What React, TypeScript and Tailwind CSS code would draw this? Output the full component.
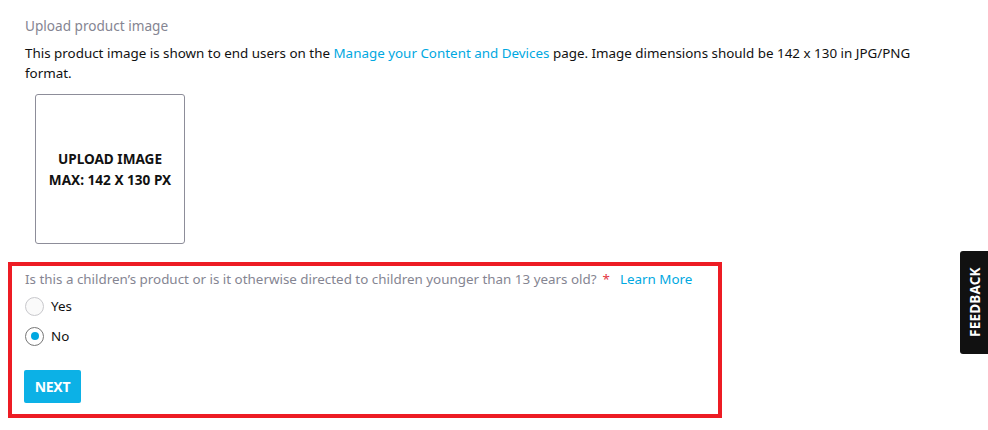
import React from "react";

export default function App() {
  return (
    <div className="relative w-[988px] h-[430px] bg-white overflow-hidden" style={{ fontFamily: '"Noto Sans", "Open Sans", sans-serif' }}>
      <div className="pl-[25px] pt-[15px]">
        <div className="text-[13.6px] leading-[22px] text-[#858592]">Upload product image</div>
        <p className="mt-[6px] text-[13.4px] leading-[20px] text-[#111] w-[900px]">
          This product image is shown to end users on the{" "}
          <span className="text-[#00a8e1]">Manage your Content and Devices</span> page. Image dimensions should be 142 x 130 in JPG/PNG format.
        </p>
        <div className="ml-[10px] mt-[11px] w-[150px] h-[150px] border border-[#8d8d99] rounded-[3px] flex flex-col items-center justify-center text-[13.6px] leading-[21px] font-bold text-[#111]">
          <div>UPLOAD IMAGE</div>
          <div>MAX: 142 X 130 PX</div>
        </div>
      </div>
      <div className="ml-[8px] mt-[18px] w-[714px] h-[156px] border-[4px] border-[#ed1c24] pl-[13px] pt-[3px]">
        <div className="text-[13.4px] leading-[20px] text-[#858592] flex items-center whitespace-nowrap">
          <span>Is this a children’s product or is it otherwise directed to children younger than 13 years old?</span>
          <span className="text-[#e3343f] ml-[6px]">*</span>
          <span className="text-[#00a8e1] ml-[10px]">Learn More</span>
        </div>
        <div className="mt-[7px] h-[20px] flex items-center gap-[7px] text-[13.4px] text-[#111]">
          <span className="w-[19px] h-[19px] rounded-full border border-[#c8c8cc] bg-[#fafafa]" />
          <span>Yes</span>
        </div>
        <div className="mt-[10px] h-[20px] flex items-center gap-[7px] text-[13.4px] text-[#111]">
          <span className="w-[19px] h-[19px] rounded-full border border-[#777] bg-white flex items-center justify-center">
            <span className="w-[8px] h-[8px] rounded-full bg-[#00a8e1]" />
          </span>
          <span>No</span>
        </div>
        <button className="block -ml-[1px] mt-[24px] w-[57px] h-[33px] rounded-[2px] bg-[#0cb1e6] text-white font-bold text-[14px] tracking-[-0.3px]">NEXT</button>
      </div>
      <div className="absolute left-[960px] top-[251px] w-[30px] h-[103px] bg-[#111] rounded-l-[3px] flex items-center justify-center">
        <span className="-rotate-90 text-white font-bold text-[13.5px] whitespace-nowrap tracking-[0.2px]">FEEDBACK</span>
      </div>
    </div>
  );
}
